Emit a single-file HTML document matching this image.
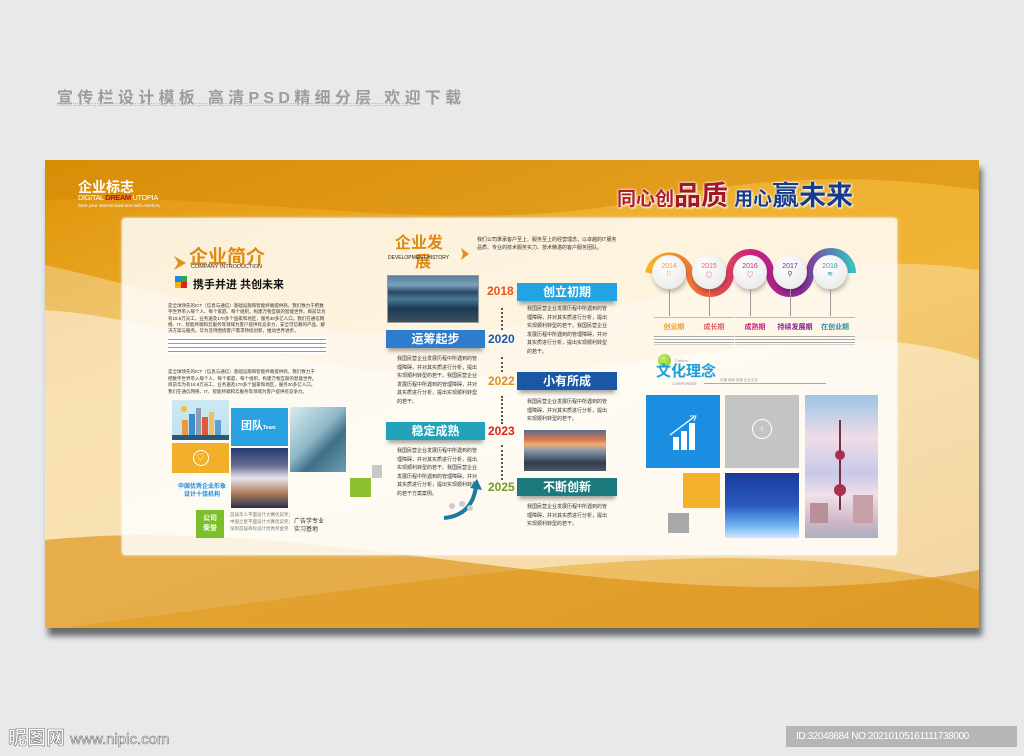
<!DOCTYPE html>
<html><head><meta charset="utf-8"><style>
*{margin:0;padding:0;box-sizing:border-box}
body{width:1024px;height:756px;background:#e8e9eb;position:relative;overflow:hidden;font-family:"Liberation Sans","Noto Sans CJK SC",sans-serif}
.a{position:absolute}
.t{font-size:5px;line-height:8px;color:#333;font-family:"Liberation Sans","Noto Sans CJK SC",sans-serif}
.bar{position:absolute;height:18px;color:#fff;font-size:12px;font-weight:bold;text-align:center;line-height:18px;box-shadow:0 5px 4px -2px rgba(0,0,0,.35)}
.yr{position:absolute;font-size:12px;font-weight:bold}
.dots{position:absolute;width:0;border-left:2px dotted #555}
.c{position:absolute;width:34px;height:34px;border-radius:50%;background:radial-gradient(circle at 40% 35%,#fff,#e4e4e4);box-shadow:1px 3px 4px rgba(0,0,0,.25);text-align:center;font-size:7px;padding-top:8px}
.lb{position:absolute;font-size:7px;font-weight:bold;width:40px;text-align:center;border-top:1px solid #bbb;padding-top:4px}
.lb i{display:block;height:10px;margin-top:3px;border-bottom:1px solid #bbb;background:repeating-linear-gradient(#fff 0 1px,#777 1px 2px,#fff 2px 3px);background-size:100% 3px;opacity:.6}
</style></head><body>
<div class="a" style="left:57px;top:84px;font-size:16px;font-weight:bold;color:#9c9c9c;letter-spacing:4.3px;white-space:nowrap">宣传栏设计模板 高清PSD精细分层 欢迎下载</div>
<div class="a" style="left:57px;top:103px;width:355px;height:3px;border-top:1px dotted #bbb;border-bottom:1px dotted #bbb"></div>

<div class="a" style="left:45px;top:160px;width:934px;height:468px;background:linear-gradient(160deg,#de9208 0%,#eeb030 30%,#f0b436 55%,#dc900a 100%);box-shadow:3px 8px 6px rgba(0,0,0,.55);overflow:hidden">
<svg class="a" width="934" height="468" style="left:0;top:0">
<path d="M0 105 C200 150 300 200 500 160 C700 120 800 90 934 110 L934 468 L0 468Z" fill="#fff" opacity=".3"/>
<path d="M0 150 C150 160 300 240 520 210 C700 190 820 160 934 200 L934 430 C700 360 400 420 0 470Z" fill="#fff" opacity=".45"/>
<path d="M0 40 C200 30 400 80 600 40 C700 20 800 10 934 30 L934 0 L0 0Z" fill="#d48806" opacity=".5"/>
<path d="M0 380 C300 350 600 470 934 410 L934 468 L0 468Z" fill="#d88a06" opacity=".6"/>
</svg>
<div class="a" style="left:33px;top:17px;color:#fff;font-size:14px;font-weight:bold">企业标志</div>
<div class="a" style="left:33px;top:33px;color:#fff;font-size:7.5px;letter-spacing:-.4px">DIGITAL <b style="color:#b0161c">DREAM</b> UTOPIA</div>
<div class="a" style="left:33px;top:43px;color:#fff;font-size:4.5px">Start your internet business with ASADAL</div>
<div class="a" style="left:572px;top:14px;font-size:22px;font-weight:bold;white-space:nowrap;text-shadow:0 0 2px #fff,0 0 2px #fff,1px 1px 2px #fff"><span style="color:#b01e2a;font-size:19px">同心创</span><span style="color:#a0182a;font-size:27px">品质</span> <span style="color:#1a3c8c;font-size:19px">用心</span><span style="color:#173c8c;font-size:27px">赢未来</span></div>
</div>

<div class="a" style="left:122px;top:218px;width:775px;height:337px;background:rgba(255,255,255,.84);border-radius:3px;box-shadow:0 0 3px rgba(255,255,255,.9)"></div>

<!-- left -->
<svg class="a" style="left:174px;top:256px" width="12" height="14"><path d="M0 0 L12 7 L0 14 L4 7Z" fill="#e0901a"/></svg>
<div class="a" style="left:189px;top:242px;font-size:19px;font-weight:bold;color:#e08a14">企业简介</div>
<div class="a" style="left:191px;top:264px;font-size:5.5px;color:#333">COMPANY INTRODUCTION</div>
<div class="a" style="left:175px;top:276px;width:6px;height:6px;background:#1a8ae0"></div>
<div class="a" style="left:181px;top:276px;width:6px;height:6px;background:#2aa83a"></div>
<div class="a" style="left:175px;top:282px;width:6px;height:6px;background:#f0b010"></div>
<div class="a" style="left:181px;top:282px;width:6px;height:6px;background:#e02020"></div>
<div class="a" style="left:193px;top:276px;font-size:11px;font-weight:bold;color:#111">携手并进 共创未来</div>
<div class="a t" style="left:168px;top:303px;width:158px;font-size:4.5px;line-height:6.3px;height:32px;overflow:hidden">是全球领先的ICT（信息与通信）基础设施和智能终端提供商，我们致力于把数字世界带入每个人、每个家庭、每个组织，构建万物互联的智能世界。目前华为有18.8万员工，业务遍及170多个国家和地区，服务30多亿人口。我们在通信网络、IT、智能终端和云服务等领域为客户提供有竞争力、安全可信赖的产品、解决方案与服务。华为坚持围绕客户需求持续创新，推动世界进步。</div>
<div class="a" style="left:168px;top:337px;width:158px;height:17px;background:repeating-linear-gradient(#fff 0 2px,#999 2px 3px,#fff 3px 4px)"></div>
<div class="a t" style="left:168px;top:369px;width:150px;font-size:4.5px;line-height:6.5px;height:27px;overflow:hidden">是全球领先的ICT（信息与通信）基础设施和智能终端提供商，我们致力于把数字世界带入每个人、每个家庭、每个组织，构建万物互联的智能世界。目前华为有18.8万员工，业务遍及170多个国家和地区，服务30多亿人口。我们在通信网络、IT、智能终端和云服务等领域为客户提供有竞争力。</div>
<div class="a" style="left:172px;top:400px;width:57px;height:40px;background:linear-gradient(#cde9f3,#bfe0ee)"><svg width="57" height="40"><rect x="10" y="20" width="6" height="16" fill="#e89a40"/><rect x="17" y="14" width="6" height="22" fill="#3b8dc9"/><rect x="24" y="8" width="5" height="28" fill="#8a9cb0"/><rect x="30" y="17" width="6" height="19" fill="#e05a3a"/><rect x="37" y="12" width="5" height="24" fill="#f0c060"/><rect x="43" y="20" width="6" height="16" fill="#5aa0d0"/><circle cx="12" cy="9" r="3" fill="#f2c230"/><rect x="0" y="35" width="57" height="5" fill="#2a5878"/></svg></div>
<div class="a" style="left:231px;top:408px;width:57px;height:38px;background:#2aa1e0;color:#fff;font-size:11px;font-weight:bold;padding:9px 0 0 10px">团队<span style="font-size:5px">Team</span></div>
<div class="a" style="left:290px;top:407px;width:56px;height:65px;background:linear-gradient(135deg,#d9ecf2,#8fb8c8 45%,#3e6f88 65%,#6d9db0)"></div>
<div class="a" style="left:172px;top:443px;width:57px;height:30px;background:#f2b02a"><div style="margin:7px auto;width:16px;height:16px;border:1px solid #fff;border-radius:50%;color:#fff;font-size:8px;text-align:center;line-height:14px">♡</div></div>
<div class="a" style="left:231px;top:448px;width:57px;height:60px;background:linear-gradient(#243a70,#6a6e90 30%,#e8e4ec 50%,#b08060 75%,#283048)"></div>
<div class="a" style="left:172px;top:483px;width:60px;font-size:6px;color:#1a8ae0;font-weight:bold;text-align:center;line-height:8px">中国优秀企业形象<br>设计十佳机构</div>
<div class="a" style="left:294px;top:518px;font-size:6px;color:#333;line-height:8px">广告学专业<br>实习基地</div>
<div class="a" style="left:196px;top:510px;width:28px;height:28px;background:#7bbf2c;color:#fff;font-size:7px;font-weight:bold;text-align:center;line-height:10px;padding-top:4px">公司<br>荣誉</div>
<div class="a t" style="left:230px;top:511px;font-size:4.5px;line-height:7px;color:#777">首届华人平面设计大赛优异奖；<br>中国之星平面设计大赛优异奖；<br>深圳首届商标设计优秀奖金奖</div>
<div class="a" style="left:372px;top:465px;width:10px;height:13px;background:#c8c8c8"></div>
<div class="a" style="left:350px;top:478px;width:21px;height:19px;background:#8cc02c"></div>

<!-- middle -->
<div class="a" style="left:395px;top:234px;font-size:16px;font-weight:bold;color:#e08a14;line-height:19px">企业发<br><span style="margin-left:20px">展</span></div>
<div class="a" style="left:388px;top:255px;font-size:5px;color:#222">DEVELOPMENT HISTORY</div>
<svg class="a" style="left:461px;top:248px" width="8" height="12"><path d="M0 0 L8 6 L0 12 L2 6Z" fill="#e0901a"/></svg>
<div class="a t" style="left:477px;top:237px;width:140px;font-size:5px;line-height:7.5px">我们公司秉承客户至上、服务至上的经营理念，以卓越的IT服务品质、专业的技术服务实力、技术精湛的客户服务团队。</div>
<div class="a" style="left:387px;top:275px;width:92px;height:48px;background:linear-gradient(#5a7ea0,#7aa0b8 20%,#2a4868 35%,#4a7894 50%,#1e3a54 70%,#3a5060);border:1px solid #999"></div>
<div class="yr" style="left:487px;top:284px;color:#e8541a">2018</div>
<div class="bar" style="left:517px;top:283px;width:100px;background:#22a4e4">创立初期</div>
<div class="dots" style="left:501px;top:308px;height:22px"></div>
<div class="a t" style="left:527px;top:305px;width:80px;line-height:8.5px">我国民营企业发展历程中所遇到的管理障碍，并对其实质进行分析，提出实现顺利转型的若干。我国民营企业发展历程中所遇到的管理障碍，并对其实质进行分析，提出实现顺利转型的若干。</div>
<div class="bar" style="left:386px;top:330px;width:99px;background:#2e7ccc">运筹起步</div>
<div class="yr" style="left:488px;top:332px;color:#1e5aa8">2020</div>
<div class="a t" style="left:397px;top:355px;width:80px;line-height:8.5px">我国民营企业发展历程中所遇到的管理障碍，并对其实质进行分析，提出实现顺利转型的若干。我国民营企业发展历程中所遇到的管理障碍，并对其实质进行分析，提出实现顺利转型的若干。</div>
<div class="dots" style="left:501px;top:357px;height:15px"></div>
<div class="yr" style="left:488px;top:374px;color:#d8901a">2022</div>
<div class="bar" style="left:517px;top:372px;width:100px;background:#1a58a6">小有所成</div>
<div class="dots" style="left:501px;top:396px;height:28px"></div>
<div class="a t" style="left:527px;top:398px;width:80px;line-height:8.5px">我国民营企业发展历程中所遇到的管理障碍，并对其实质进行分析，提出实现顺利转型的若干。</div>
<div class="bar" style="left:386px;top:422px;width:99px;background:#22a2b8">稳定成熟</div>
<div class="yr" style="left:488px;top:424px;color:#e02020">2023</div>
<div class="a" style="left:524px;top:430px;width:82px;height:41px;background:linear-gradient(#5a6a8c,#e07850 25%,#f0b070 35%,#8a98a8 50%,#2e3c4e 80%,#4a5868)"></div>
<div class="a t" style="left:397px;top:447px;width:80px;line-height:8.5px">我国民营企业发展历程中所遇到的管理障碍，并对其实质进行分析，提出实现顺利转型的若干。我国民营企业发展历程中所遇到的管理障碍，并对其实质进行分析，提出实现顺利转型的若干方案案例。</div>
<svg class="a" style="left:440px;top:478px" width="45" height="42"><path d="M4 40 C25 38 34 25 36 8" stroke="#1a7aa0" stroke-width="4" fill="none"/><path d="M30 10 L37 1 L42 12Z" fill="#1a7aa0"/><circle cx="12" cy="28" r="3" fill="#ccc"/><circle cx="22" cy="26" r="3" fill="#ccc"/><circle cx="30" cy="30" r="3" fill="#ccc"/></svg>
<div class="dots" style="left:501px;top:445px;height:35px"></div>
<div class="yr" style="left:488px;top:480px;color:#7a9a1a">2025</div>
<div class="bar" style="left:517px;top:478px;width:100px;background:#1a7a7c">不断创新</div>
<div class="a t" style="left:527px;top:503px;width:80px;line-height:8.5px">我国民营企业发展历程中所遇到的管理障碍，并对其实质进行分析，提出实现顺利转型的若干。</div>

<!-- right -->
<svg class="a" style="left:644px;top:248px" width="220" height="60">
<defs><linearGradient id="g" x1="0" x2="1"><stop offset="0" stop-color="#f5b520"/><stop offset=".25" stop-color="#f06a3a"/><stop offset=".5" stop-color="#d02080"/><stop offset=".75" stop-color="#8a2a9a"/><stop offset="1" stop-color="#3ac0c0"/></linearGradient></defs>
<path d="M5 25 A21 21 0 0 1 46 25 A20 20 0 0 0 86 25 A20 20 0 0 1 126 25 A20 20 0 0 0 166 25 A20 20 0 0 1 208 25" stroke="url(#g)" stroke-width="8" fill="none"/>
</svg>
<div class="c" style="left:652px;top:255px;color:#f0a020">2014<br>⚐</div>
<div class="c" style="left:692px;top:255px;color:#e86060">2015<br>◎</div>
<div class="c" style="left:733px;top:255px;color:#d02080">2016<br>♡</div>
<div class="c" style="left:773px;top:255px;color:#802090">2017<br>⚲</div>
<div class="c" style="left:813px;top:255px;color:#30a0a0">2018<br>≋</div>
<div class="a" style="left:669px;top:289px;width:1px;height:27px;background:#999"></div>
<div class="a" style="left:709px;top:289px;width:1px;height:27px;background:#999"></div>
<div class="a" style="left:750px;top:289px;width:1px;height:27px;background:#999"></div>
<div class="a" style="left:790px;top:289px;width:1px;height:27px;background:#999"></div>
<div class="a" style="left:830px;top:289px;width:1px;height:27px;background:#999"></div>
<div class="lb" style="left:654px;top:317px;color:#f0a020">创业期<i></i></div>
<div class="lb" style="left:694px;top:317px;color:#e86060">成长期<i></i></div>
<div class="lb" style="left:735px;top:317px;color:#d02080">成熟期<i></i></div>
<div class="lb" style="left:775px;top:317px;color:#802090">持续发展期<i></i></div>
<div class="lb" style="left:815px;top:317px;color:#3090a0">在创业期<i></i></div>
<div class="a" style="left:658px;top:354px;width:13px;height:13px;border-radius:50%;background:radial-gradient(circle at 40% 35%,#c8f070,#7ac020)"></div>
<div class="a" style="left:675px;top:358px;font-size:4px;color:#999">Culture</div>
<div class="a" style="left:656px;top:364px;font-size:15px;font-weight:bold;color:#1a9ee0;line-height:16px">文化理念</div>
<div class="a" style="left:672px;top:381px;font-size:4px;color:#888">CORPORATE</div>
<div class="a" style="left:704px;top:383px;width:122px;height:1px;background:#aaa"></div>
<div class="a" style="left:720px;top:378px;font-size:3.5px;color:#999">价值 使命 愿景 企业文化</div>
<div class="a" style="left:646px;top:395px;width:74px;height:73px;background:#1a8ee0"><svg width="74" height="73"><rect x="27" y="42" width="6" height="13" fill="#fff"/><rect x="35" y="36" width="6" height="19" fill="#fff"/><rect x="43" y="28" width="6" height="27" fill="#fff"/><path d="M24 40 L48 22" stroke="#fff" stroke-width="1.3"/><path d="M44 21 L50 21 L48 26" stroke="#fff" fill="none"/></svg></div>
<div class="a" style="left:725px;top:395px;width:74px;height:73px;background:#c4c4c4"><div style="margin:24px auto 0;width:20px;height:20px;border:1px solid #fff;border-radius:50%;color:#fff;font-size:10px;text-align:center;line-height:18px">‹</div></div>
<div class="a" style="left:805px;top:395px;width:73px;height:143px;background:linear-gradient(#9cc4e4,#f0dce8 30%,#c8c8e8 55%,#f0e0e8 70%,#d0b8c8 88%,#a8b0c0)"><svg width="73" height="143"><rect x="34" y="25" width="2" height="90" fill="#7a3040"/><circle cx="35" cy="60" r="5" fill="#a83050"/><circle cx="35" cy="95" r="6" fill="#a83050"/><rect x="5" y="108" width="18" height="20" fill="#b89098"/><rect x="48" y="100" width="20" height="28" fill="#c8a0a8"/></svg></div>
<div class="a" style="left:683px;top:473px;width:37px;height:35px;background:#f4b22a"></div>
<div class="a" style="left:725px;top:473px;width:74px;height:65px;background:linear-gradient(#1a3a9a,#2a5ac0 50%,#6ab0f0 80%,#cde8ff)"></div>
<div class="a" style="left:668px;top:513px;width:21px;height:20px;background:#a8a8a8"></div>

<div class="a" style="left:8px;top:723px;font-size:19px;color:#fff;-webkit-text-stroke:.6px #777;font-weight:bold">昵图网 <span style="font-size:15px;font-weight:normal">www.nipic.com</span></div>
<div class="a" style="left:786px;top:726px;width:231px;height:21px;background:#b5b6b8;color:#fff;font-size:10px;line-height:21px;padding-left:10px;letter-spacing:-.4px">ID:32048684 NO:20210105161111738000</div>
</body></html>
